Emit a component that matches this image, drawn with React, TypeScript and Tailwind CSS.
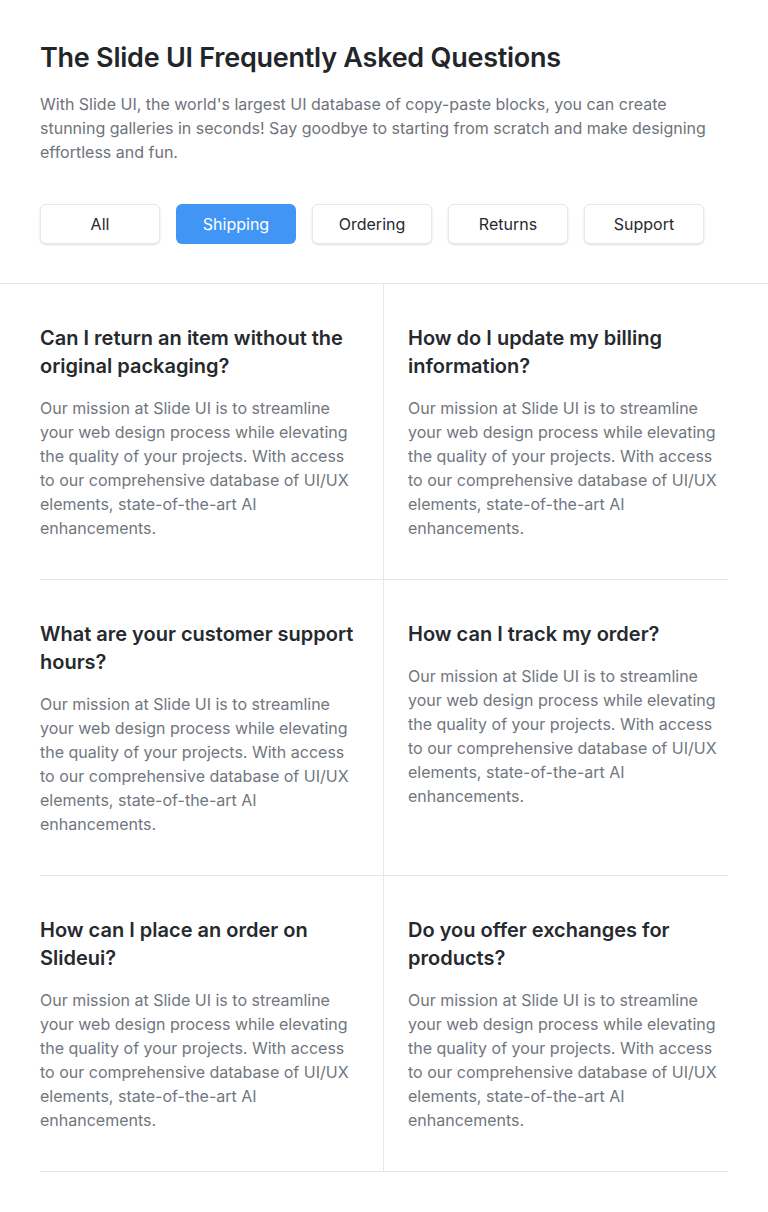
import React, { useState } from "react";

const tabs = ["All", "Shipping", "Ordering", "Returns", "Support"];

const body =
    "Our mission at Slide UI is to streamline your web design process while elevating the quality of your projects. With access to our comprehensive database of UI/UX elements, state-of-the-art AI enhancements.";

const faqs = [
    "Can I return an item without the original packaging?",
    "How do I update my billing information?",
    "What are your customer support hours?",
    "How can I track my order?",
    "How can I place an order on Slideui?",
    "Do you offer exchanges for products?",
];

function FaqCell({ question, index }: { question: string; index: number }) {
    const left = index % 2 === 0;
    return (
        <div
            className={
                left
                    ? "border-b border-r border-gray-200 pt-10 pb-[39px] pr-5"
                    : "border-b border-gray-200 pt-10 pb-[39px] pl-6 pr-2"
            }
        >
            <h3 className="text-[20px] leading-7 font-semibold text-[#26292e]">{question}</h3>
            <p className="mt-4 max-w-[312px] text-base leading-6 text-[#717680]">{body}</p>
        </div>
    );
}

export default function App() {
    const [active, setActive] = useState("Shipping");

    return (
        <div className="min-h-[1212px] bg-white font-['Inter',sans-serif]">
            <div className="px-10 pt-10 pb-[39px]">
                <h1 className="text-[27px] leading-9 font-semibold tracking-[-0.25px] text-[#22252a]">
                    The Slide UI Frequently Asked Questions
                </h1>
                <p className="mt-4 text-base leading-6 text-[#6f737b]">
                    With Slide UI, the world's largest UI database of copy-paste blocks, you can create stunning galleries
                    in seconds! Say goodbye to starting from scratch and make designing effortless and fun.
                </p>
                <div className="mt-10 flex gap-4">
                    {tabs.map((t) => (
                        <button
                            key={t}
                            onClick={() => setActive(t)}
                            className={
                                t === active
                                    ? "h-10 w-[120px] rounded-md bg-[#4196f5] text-base text-white"
                                    : "h-10 w-[120px] rounded-md border border-gray-200 bg-white text-base text-[#26292e] shadow-sm"
                            }
                        >
                            {t}
                        </button>
                    ))}
                </div>
            </div>

            <div className="border-t border-gray-200">
                <div className="mx-10 grid grid-cols-2">
                    {faqs.map((q, i) => (
                        <FaqCell key={q} question={q} index={i} />
                    ))}
                </div>
            </div>
        </div>
    );
}
